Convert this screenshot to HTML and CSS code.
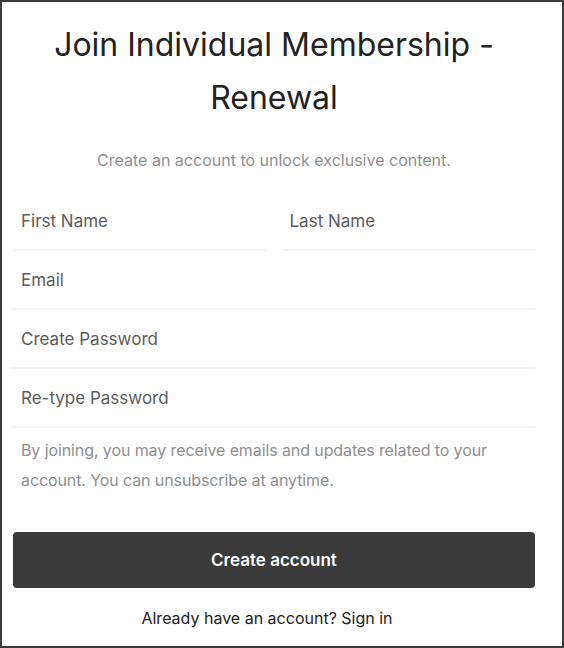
FILE: index.html
```html
<!DOCTYPE html>
<html lang="en">

<head>
    <meta charset="UTF-8">
    <meta name="viewport" content="width=device-width, initial-scale=1.0">
    <title>Join Individual Membership - Renewal</title>
    <link rel="stylesheet" href="styles.css">
</head>

<body>

    <div class="page">
        <h1 class="title">Join Individual Membership - Renewal</h1>
        <p class="subtitle">Create an account to unlock exclusive content.</p>

        <form class="signup">
            <div class="row">
                <input class="field" type="text" name="first" placeholder="First Name">
                <input class="field" type="text" name="last" placeholder="Last Name">
            </div>
            <input class="field" type="email" name="email" placeholder="Email">
            <input class="field" type="password" name="password" placeholder="Create Password">
            <input class="field" type="password" name="password2" placeholder="Re-type Password">

            <p class="note">By joining, you may receive emails and updates related to your account. You can unsubscribe at anytime.</p>

            <button type="submit" class="submit">Create account</button>
        </form>

        <p class="signin">Already have an account? Sign in</p>
    </div>

</body>

</html>
```

FILE: styles.css
```css
body {
    margin: 0;
    background-color: #ffffff;
    font-family: Inter, "Noto Sans", sans-serif;
}

.page {
    height: 648px;
    box-sizing: border-box;
    border: 2px solid #3c3c3c;
    padding: 0 27px 0 11px;
}

.title {
    margin: 16px 30px 0;
    font-size: 32px;
    font-weight: 400;
    line-height: 53px;
    text-align: center;
    color: #222222;
}

.subtitle {
    margin: 24px 0 0;
    font-size: 16px;
    line-height: 24px;
    text-align: center;
    color: #8f8f8f;
}

.signup {
    display: flex;
    flex-direction: column;
    margin-top: 20px;
}

.row {
    display: flex;
    gap: 15px;
}

.field {
    display: block;
    width: 100%;
    height: 59px;
    box-sizing: border-box;
    margin: 0;
    padding: 0 8px;
    border: none;
    border-bottom: 2px solid #f2f2f2;
    font-family: inherit;
    font-size: 17px;
    color: #333333;
    background: transparent;
    outline: none;
}

.field::placeholder {
    color: #5c5c5c;
    opacity: 1;
}

.note {
    margin: 7px 0 0;
    padding-left: 8px;
    font-size: 16px;
    line-height: 30px;
    letter-spacing: -0.1px;
    color: #8f8f8f;
}

.submit {
    margin-top: 37px;
    height: 56px;
    border: none;
    border-radius: 4px;
    background-color: #3a3a3a;
    color: #ffffff;
    font-family: inherit;
    font-size: 17px;
    font-weight: 600;
}

.signin {
    margin: 18px 0 0;
    padding-right: 14px;
    font-size: 16px;
    line-height: 24px;
    text-align: center;
    color: #222222;
}
```
